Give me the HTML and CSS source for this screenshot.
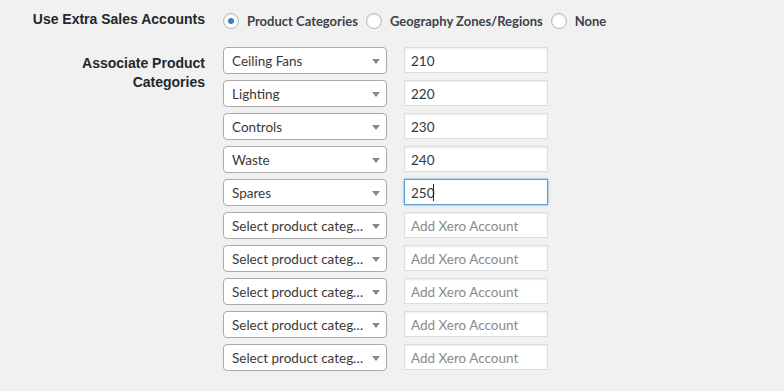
FILE: index.html
```html
<!DOCTYPE html>
<html lang="en">
<head>
  <meta charset="UTF-8">
  <title>Extra Sales Accounts</title>
  <link rel="stylesheet" href="styles.css">
</head>
<body>
  <div class="settings">
    <div class="form-row first">
      <div class="label">Use Extra Sales Accounts</div>
      <div class="options">
        <label class="radio"><span class="dot checked"></span>Product Categories</label>
        <label class="radio"><span class="dot"></span>Geography Zones/Regions</label>
        <label class="radio"><span class="dot"></span>None</label>
      </div>
    </div>
    <div class="form-row">
      <div class="label multi">Associate Product<br>Categories</div>
      <div class="pairs">
        <span class="select"><span class="select-text">Ceiling Fans</span><b class="arrow"></b></span>
        <input class="field" type="text" value="210" placeholder="Add Xero Account">
        <span class="select"><span class="select-text">Lighting</span><b class="arrow"></b></span>
        <input class="field" type="text" value="220" placeholder="Add Xero Account">
        <span class="select"><span class="select-text">Controls</span><b class="arrow"></b></span>
        <input class="field" type="text" value="230" placeholder="Add Xero Account">
        <span class="select"><span class="select-text">Waste</span><b class="arrow"></b></span>
        <input class="field" type="text" value="240" placeholder="Add Xero Account">
        <span class="select"><span class="select-text">Spares</span><b class="arrow"></b></span>
        <span class="field-wrap"><input class="field focus" type="text" value="250" placeholder="Add Xero Account"><i class="caret"></i></span>
        <span class="select"><span class="select-text">Select product category</span><b class="arrow"></b></span>
        <input class="field" type="text" placeholder="Add Xero Account">
        <span class="select"><span class="select-text">Select product category</span><b class="arrow"></b></span>
        <input class="field" type="text" placeholder="Add Xero Account">
        <span class="select"><span class="select-text">Select product category</span><b class="arrow"></b></span>
        <input class="field" type="text" placeholder="Add Xero Account">
        <span class="select"><span class="select-text">Select product category</span><b class="arrow"></b></span>
        <input class="field" type="text" placeholder="Add Xero Account">
        <span class="select"><span class="select-text">Select product category</span><b class="arrow"></b></span>
        <input class="field" type="text" placeholder="Add Xero Account">
      </div>
    </div>
  </div>
</body>
</html>
```
FILE: styles.css
```css
body { margin: 0; background: #f1f1f1; color: #444; font-family: Lato, "Source Sans Pro", sans-serif; font-size: 13.5px; }
.settings { padding-top: 9px; }
.form-row { display: grid; grid-template-columns: 205px 1fr; column-gap: 18px; }
.form-row.first { margin-bottom: 16px; }
.label { font-family: "Liberation Sans", Arial, sans-serif; font-weight: bold; font-size: 14px; line-height: 20px; color: #23282d; text-align: right; }
.label.multi { padding-top: 7px; line-height: 19px; }
.options { display: flex; align-items: center; height: 20px; margin-top: 2px; }
.radio { display: flex; align-items: center; font-weight: 700; font-size: 13px; color: #3c434a; margin-right: 8px; white-space: nowrap; }
.dot { width: 14px; height: 14px; border: 1px solid #b4b9be; border-radius: 50%; background: #fff; margin-right: 8px; box-shadow: inset 0 1px 2px rgba(0,0,0,.1); display: flex; align-items: center; justify-content: center; }
.dot.checked::before { content: ""; width: 6px; height: 6px; border-radius: 50%; background: #3d7bc6; }
.pairs { display: grid; grid-template-columns: 164px 144px; column-gap: 17px; row-gap: 6px; align-items: start; }
.select { position: relative; display: block; box-sizing: border-box; height: 27px; line-height: 26px; background: #fff; border: 1px solid #aaa; border-radius: 4px; padding: 0 18px 0 8px; color: #3a3a3a; }
.select-text { display: block; overflow: hidden; white-space: nowrap; text-overflow: ellipsis; }
.arrow { position: absolute; right: 6px; top: 11px; border-style: solid; border-width: 5px 4px 0 4px; border-color: #888 transparent transparent transparent; }
.field { display: block; box-sizing: border-box; width: 144px; height: 26px; margin: 0; padding: 1px 6px 0; border: 1px solid #ddd; background: #fff; box-shadow: inset 0 1px 2px rgba(0,0,0,.07); font-family: inherit; font-size: 13.5px; color: #32373c; outline: none; }
.field::placeholder { color: #8a8a8a; }
.field.focus { border-color: #5b9dd9; box-shadow: 0 0 2px rgba(30,140,190,.8); }
.field-wrap { position: relative; display: block; }
.caret { position: absolute; left: 29px; top: 5px; width: 1px; height: 17px; background: #222; }
```
